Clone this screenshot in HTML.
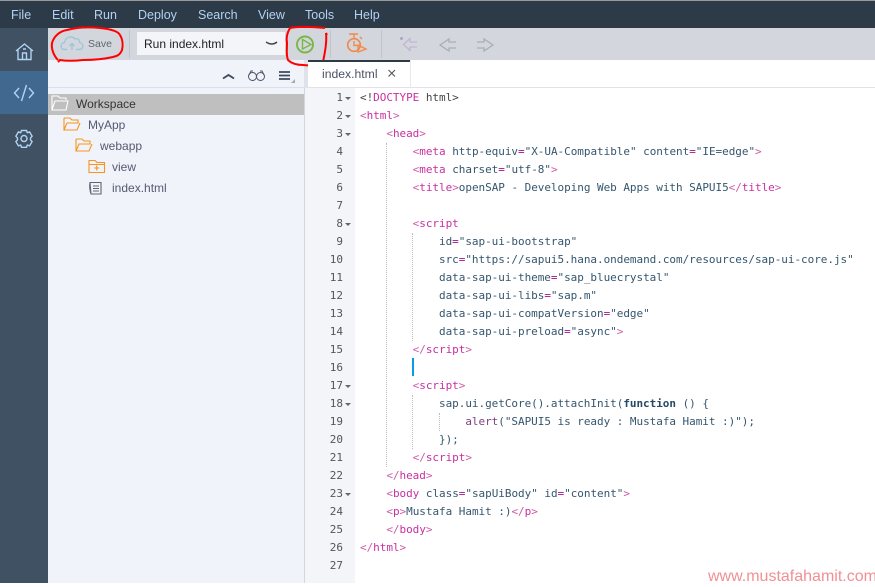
<!DOCTYPE html>
<html><head><meta charset="utf-8"><style>
*{box-sizing:border-box}
html,body{margin:0;padding:0;width:875px;height:583px;overflow:hidden;background:#fff;font-family:"Liberation Sans",sans-serif}
.a{position:absolute}
.m{position:absolute;top:3px;height:25px;line-height:25px;font-size:12.500px;color:#b3d2f2}
.t{position:absolute;font-size:12px;color:#555a70;white-space:pre}
#code div{position:absolute;left:360px;height:18px;white-space:pre;font:11px/18px "DejaVu Sans Mono",monospace;letter-spacing:-.04px;color:#35566e;margin-top:1px}
.ln{position:absolute;left:305px;width:38px;text-align:right;font:11px/18px "DejaVu Sans Mono",monospace;color:#555;margin-top:1px}
.f{position:absolute;left:345px;width:0;height:0;border-left:3px solid transparent;border-right:3px solid transparent;border-top:3px solid #666;margin-top:1px}
i{font-style:normal;color:#cf5aa8}
b{font-weight:normal;color:#c92fa0}
u{text-decoration:none;color:#a0108a}
s{text-decoration:none;font-weight:bold}
em{font-style:normal;color:#444}
.g{position:absolute;width:0;border-left:1px dotted #bbb}
</style></head><body>
<div class="a" style="left:0;top:0;width:875px;height:1px;background:#999"></div>
<div class="a" style="left:0;top:1px;width:875px;height:27px;background:#2d3b49"></div>
<span class="m" style="left:11px">File</span><span class="m" style="left:52px">Edit</span><span class="m" style="left:94px">Run</span><span class="m" style="left:138px">Deploy</span><span class="m" style="left:198px">Search</span><span class="m" style="left:258px">View</span><span class="m" style="left:305px">Tools</span><span class="m" style="left:354px">Help</span>

<div class="a" style="left:0;top:28px;width:48px;height:555px;background:#3f5163"></div>
<div class="a" style="left:0;top:71px;width:48px;height:43px;background:#41698f"></div>
<svg class="a" style="left:0;top:28px" width="48" height="130" fill="none" stroke="#b0d3f4" stroke-width="1.400">
<path d="M16 23 L24.500 16 L33 23 M18 22 V31.500 H31 V22 M22.500 31.500 V25 H26.500 V31.500 M23 21h3"/>
<path d="M19 60 L14.500 65 L19 70 M29 60 L33.500 65 L29 70 M26.500 57 L21.500 73"/>
<g transform="translate(0 -.5)"><circle cx="24" cy="111" r="3"/><path d="M21.500 103 h5 l.8 2.200 2.300-.7 2.500 4.200-1.600 1.800 0 1.800 1.600 1.800-2.500 4.200-2.300-.7-.8 2.200 h-5 l-.8-2.200-2.300 .7-2.500-4.200 1.600-1.800 0-1.800-1.600-1.800 2.500-4.200 2.300 .7z"/></g>
</svg>

<div class="a" style="left:48px;top:28px;width:827px;height:32px;background:#d3d7dd"></div>
<div class="a" style="left:48px;top:60px;width:256px;height:523px;background:#f0f3f9"></div>
<div class="a" style="left:304px;top:60px;width:4px;height:28px;background:#dfe2e8"></div>
<div class="a" style="left:304px;top:88px;width:1px;height:495px;background:#d3d7dd"></div>
<div class="a" style="left:48px;top:87px;width:256px;height:1px;background:#dcdfe4"></div>
<div class="a" style="left:129px;top:30px;width:1px;height:28px;background:#bfc4ca"></div>
<div class="a" style="left:330px;top:30px;width:1px;height:28px;background:#bfc4ca"></div>
<div class="a" style="left:381px;top:30px;width:1px;height:28px;background:#bfc4ca"></div>
<div class="a" style="left:137px;top:32px;width:148px;height:23px;background:#f3f5f8"></div>
<span class="t" style="left:144px;top:37px;color:#222">Run index.html</span>
<span class="t" style="left:88px;top:38px;font-size:10.500px;color:#5f6670">Save</span>
<svg class="a" style="left:0;top:0" width="875" height="90" fill="none">
<path d="M67 49.500 H64 C60 49.500 60 43 64.500 42.500 C65 38 71 34.500 75 39 C78 38 80 40 79.500 42.500 C84 43.500 84 49.500 79 49.500 H76 M72 50 V43.500 M69.500 46 L72 43.500 L74.500 46" stroke="#9cc7d9" stroke-width="1.400"/>
<path d="M266 42 q6 4 11 0" stroke="#444" stroke-width="1.500"/>
<circle cx="305" cy="44.500" r="8" stroke="#7ab648" stroke-width="1.900"/><path d="M302.500 39.500 L311 44.500 L302.500 49 Z" stroke="#7ab648" stroke-width="1.400"/>
<circle cx="354" cy="45" r="6.300" stroke="#f08a4b" stroke-width="1.700"/><path d="M349 34 h9 M354 34 v5 M354 41 v4.500 h3 M358 45 l8 4 -8 3z M360 37 l2 2" stroke="#f08a4b" stroke-width="1.400"/>
<path d="M417 42 H410 V38.500 L403.500 44.500 L410 50.500 V47 H417" stroke="#c1b5d4" stroke-width="1.300"/><circle cx="401.500" cy="38.500" r="1.500" fill="#b39fc9"/>
<path d="M456 42 H449 V39 L440 45 L449 51 V48 H456" stroke="#a9afb7" stroke-width="1.300"/>
<path d="M477 42 H484 V39 L493 45 L484 51 V48 H477" stroke="#a9afb7" stroke-width="1.300"/>
<path d="M223 78.500 l5.500 -3.500 5.500 3.500" stroke="#3e4a5c" stroke-width="1.800"/>
<circle cx="252.500" cy="76.500" r="4" stroke="#4b5567"/><circle cx="260.500" cy="76.500" r="4" stroke="#4b5567"/><path d="M249 75 l2 -4 h2 M264 75 l-2 -4 h-2" stroke="#4b5567"/>
<path d="M279 72 h11 M279 75.500 h11 M279 79 h11" stroke="#3e4a5c" stroke-width="1.800"/><path d="M295 79 v4 h-4z" fill="#aaa"/>
<path d="M58 60 C54 56 51 49 52 43 C54 36 60 31 67 30 C78 27 90 27 100 28 C110 29 118 31 120 35 C123 40 123 46 122 50 C120 55 117 56 113 57 C104 59 94 60 83 60 C74 61 66 61 60 60 L58 62" stroke="#f00" stroke-width="2"/>
<path d="M325 28 C314 27 300 26 290 28 C287 33 286 38 287 43 C287 50 286 55 288 60 C292 64 297 65 303 65 C310 66 318 65 323 62 C325 52 327 42 326 33 L327 35" stroke="#f00" stroke-width="2"/>
</svg>

<div class="a" style="left:308px;top:60px;width:102px;height:28px;background:#fff;border-top:2px solid #2d3b49"></div>
<div class="a" style="left:308px;top:87px;width:567px;height:1px;background:#dfe2e7"></div>
<div class="a" style="left:410px;top:60px;width:1px;height:28px;background:#e6e8ec"></div>
<span class="t" style="left:322px;top:67px;color:#4a5266;font-size:12.200px">index.html</span>
<svg class="a" style="left:387px;top:69px" width="10" height="10" fill="none"><path d="M1.500 1 L8 7.500 M8 1 L1.500 7.500" stroke="#555" stroke-width="1.100"/></svg>

<div class="a" style="left:48px;top:94px;width:256px;height:21px;background:#bfbfbf"></div>
<svg class="a" style="left:48px;top:90px" width="100" height="110" fill="none" stroke-width="1.100">
<path d="M4 20 V6 H10 L12 8 H18 V10 M4 20 L7 11 H20 L18 20 Z" stroke="#fff" fill="#bfbfbf"/>
<path d="M16 28 V40 M16 28 H22 L24 30 H30 V33 H19 L16 40 H29 L32 33" stroke="#f7941e"/>
<path d="M28 49 V61 M28 49 H34 L36 51 H42 V54 H31 L28 61 H41 L44 54" stroke="#f7941e"/>
<path d="M41 70.500 H47 L49 72.500 H56.500 V82.500 H41 Z M41 74.500 H56.500 M48.700 75.500 v5 m-2.500 -2.500 h5" stroke="#f7941e"/>
<path d="M42 92.500 H53 V104 H43 Z M42 92.500 q-1 5 1 11.500 M45 96 h6 M45 98.500 h6 M45 101 h6" stroke="#606774"/>
</svg>
<span class="t" style="left:76px;top:97px;color:#333">Workspace</span>
<span class="t" style="left:88px;top:118px">MyApp</span>
<span class="t" style="left:100px;top:139px">webapp</span>
<span class="t" style="left:112px;top:160px">view</span>
<span class="t" style="left:112px;top:181px">index.html</span>

<div class="a" style="left:305px;top:88px;width:50px;height:495px;background:#f3f5f9"></div>
<div class="g" style="left:386px;top:143px;height:324px"></div>
<div class="g" style="left:412px;top:233px;height:108px"></div>
<div class="g" style="left:412px;top:395px;height:54px"></div>
<div class="g" style="left:439px;top:413px;height:18px"></div>
<div class="a" style="left:412px;top:358px;width:2px;height:18px;background:#0a9be8"></div>
<div id="code">
<div style="top:88px"><em>&lt;!</em><b>DOCTYPE</b> <em>html&gt;</em></div>
<div style="top:106px"><i>&lt;</i><b>html</b><i>&gt;</i></div>
<div style="top:124px">    <i>&lt;</i><b>head</b><i>&gt;</i></div>
<div style="top:142px">        <i>&lt;</i><b>meta</b> http-equiv<u>=</u>"X-UA-Compatible" content<u>=</u>"IE=edge"<i>&gt;</i></div>
<div style="top:160px">        <i>&lt;</i><b>meta</b> charset<u>=</u>"utf-8"<i>&gt;</i></div>
<div style="top:178px">        <i>&lt;</i><b>title</b><i>&gt;</i>openSAP - Developing Web Apps with SAPUI5<i>&lt;/</i><b>title</b><i>&gt;</i></div>
<div style="top:214px">        <i>&lt;</i><b>script</b></div>
<div style="top:232px">            id<u>=</u>"sap-ui-bootstrap"</div>
<div style="top:250px">            src<u>=</u>"https://sapui5.hana.ondemand.com/resources/sap-ui-core.js"</div>
<div style="top:268px">            data-sap-ui-theme<u>=</u>"sap_bluecrystal"</div>
<div style="top:286px">            data-sap-ui-libs<u>=</u>"sap.m"</div>
<div style="top:304px">            data-sap-ui-compatVersion<u>=</u>"edge"</div>
<div style="top:322px">            data-sap-ui-preload<u>=</u>"async"<i>&gt;</i></div>
<div style="top:340px">        <i>&lt;/</i><b>script</b><i>&gt;</i></div>
<div style="top:376px">        <i>&lt;</i><b>script</b><i>&gt;</i></div>
<div style="top:394px">            sap.ui.getCore().attachInit(<s style="color:#264a66">function</s> () {</div>
<div style="top:412px">                <span style="color:#7b3f7b">alert</span>("SAPUI5 is ready : Mustafa Hamit :)");</div>
<div style="top:430px">            });</div>
<div style="top:448px">        <i>&lt;/</i><b>script</b><i>&gt;</i></div>
<div style="top:466px">    <i>&lt;/</i><b>head</b><i>&gt;</i></div>
<div style="top:484px">    <i>&lt;</i><b>body</b> class<u>=</u>"sapUiBody" id<u>=</u>"content"<i>&gt;</i></div>
<div style="top:502px">    <i>&lt;</i><b>p</b><i>&gt;</i>Mustafa Hamit :)<i>&lt;/</i><b>p</b><i>&gt;</i></div>
<div style="top:520px">    <i>&lt;/</i><b>body</b><i>&gt;</i></div>
<div style="top:538px"><i>&lt;/</i><b>html</b><i>&gt;</i></div>
</div>
<span class="ln" style="top:88px">1</span><span class="ln" style="top:106px">2</span><span class="ln" style="top:124px">3</span><span class="ln" style="top:142px">4</span><span class="ln" style="top:160px">5</span><span class="ln" style="top:178px">6</span><span class="ln" style="top:196px">7</span><span class="ln" style="top:214px">8</span><span class="ln" style="top:232px">9</span><span class="ln" style="top:250px">10</span><span class="ln" style="top:268px">11</span><span class="ln" style="top:286px">12</span><span class="ln" style="top:304px">13</span><span class="ln" style="top:322px">14</span><span class="ln" style="top:340px">15</span><span class="ln" style="top:358px">16</span><span class="ln" style="top:376px">17</span><span class="ln" style="top:394px">18</span><span class="ln" style="top:412px">19</span><span class="ln" style="top:430px">20</span><span class="ln" style="top:448px">21</span><span class="ln" style="top:466px">22</span><span class="ln" style="top:484px">23</span><span class="ln" style="top:502px">24</span><span class="ln" style="top:520px">25</span><span class="ln" style="top:538px">26</span><span class="ln" style="top:556px">27</span>
<span class="f" style="top:96px"></span><span class="f" style="top:114px"></span><span class="f" style="top:132px"></span><span class="f" style="top:222px"></span><span class="f" style="top:384px"></span><span class="f" style="top:402px"></span><span class="f" style="top:492px"></span>
<div class="a" style="left:708px;top:567px;font:16px/20px 'Liberation Sans',sans-serif;color:#f09096;white-space:nowrap">www.mustafahamit.com</div>
</body></html>
